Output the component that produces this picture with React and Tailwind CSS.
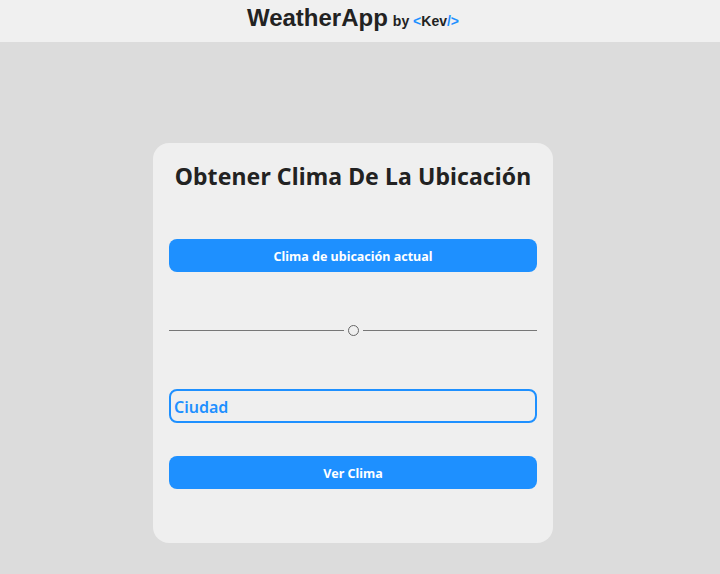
import React from 'react';

function Header() {
  return (
    <header className="h-[42px] bg-[#f0f0f0] flex items-center justify-center pr-[14px] pb-[6px]">
      <h1 className="flex items-baseline gap-[5px] font-['Liberation_Sans',Arial,sans-serif] text-[#222]">
        <span className="text-[24px] font-bold">WeatherApp</span>
        <span className="text-[14px] font-bold">
          by <span className="text-[#1e90ff]">&lt;</span>Kev<span className="text-[#1e90ff]">/&gt;</span>
        </span>
      </h1>
    </header>
  );
}

function Divider() {
  return (
    <div className="flex items-center h-[20px]">
      <div className="flex-1 h-px bg-[#777]" />
      <div className="w-[11px] h-[11px] rounded-full border border-[#666] mx-[4px]" />
      <div className="flex-1 h-px bg-[#777]" />
    </div>
  );
}

export default function App() {
  return (
    <div className="min-h-screen bg-[#dcdcdc] font-['Noto_Sans',sans-serif]">
      <Header />
      <main className="flex justify-center pt-[101px] pr-[14px]">
        <div className="w-[400px] h-[400px] bg-[#efefef] rounded-[16px] px-[16px] flex flex-col">
          <h2 className="text-center text-[23px] font-bold text-[#222] mt-[17px] leading-[32px] tracking-[0.1px]">
            Obtener Clima De La Ubicación
          </h2>
          <button className="mt-[47px] h-[33px] w-full rounded-[8px] bg-[#1e90ff] text-white text-[12.5px] font-bold pt-[3px]">
            Clima de ubicación actual
          </button>
          <div className="mt-[48px]">
            <Divider />
          </div>
          <input
            placeholder="Ciudad"
            className="mt-[49px] h-[34px] w-full rounded-[8px] border-2 border-[#1e90ff] bg-transparent px-[3px] pt-[2px] text-[16px] font-semibold text-[#1e90ff] placeholder:text-[#1e90ff] outline-none"
          />
          <button className="mt-[33px] h-[33px] w-full rounded-[8px] bg-[#1e90ff] text-white text-[12.5px] font-bold pt-[3px]">
            Ver Clima
          </button>
        </div>
      </main>
    </div>
  );
}
